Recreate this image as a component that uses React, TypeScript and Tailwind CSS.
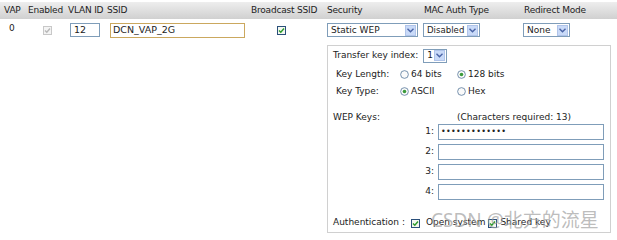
const font = { fontFamily: '"DejaVu Sans", Verdana, sans-serif' };

const Arrow: React.FC = () => (
    <span className="flex items-center justify-center w-[11px] h-[11px] bg-[#c9daf8] border border-[#b0c4ea] mr-[1px]">
        <svg width="7" height="5" viewBox="0 0 7 5">
            <path d="M0.5 0.8 L3.5 3.8 L6.5 0.8" fill="none" stroke="#4a64a6" strokeWidth="1.4" />
        </svg>
    </span>
);

const Select: React.FC<{ value: string; className: string }> = ({ value, className }) => (
    <div className={`flex items-center justify-between border border-[#7f9db9] bg-white h-[14px] ${className}`}>
        <span className="pl-[3px] leading-none">{value}</span>
        <Arrow />
    </div>
);

const Check: React.FC<{ disabled?: boolean }> = ({ disabled }) => (
    <span className={`inline-flex shrink-0 items-center justify-center w-[9px] h-[9px] border ${disabled ? "border-[#c8c8c8] bg-[#f4f4f4]" : "border-[#2a4f7a] bg-[#f4f8f0]"}`}>
        <svg width="7" height="7" viewBox="0 0 7 7">
            <path d="M1 3.5 L2.8 5.3 L6 1.5" fill="none" stroke={disabled ? "#b8b8b8" : "#2a9a2a"} strokeWidth="1.4" />
        </svg>
    </span>
);

const Radio: React.FC<{ on?: boolean }> = ({ on }) => (
    <svg width="9" height="9" viewBox="0 0 10 10" className="shrink-0">
        <circle cx="5" cy="5" r="4.3" fill="#fafafa" stroke="#5a7a9c" strokeWidth="0.9" />
        {on && <circle cx="5" cy="5" r="2" fill="#3a9a3a" />}
    </svg>
);

const KeyRow: React.FC<{ n: number; dots?: boolean }> = ({ n, dots }) => (
    <div className="flex items-center h-[16px] mb-[4px]">
        <span className="w-[101px] text-right">{n}:</span>
        <div className="ml-[4px] w-[166px] h-[16px] border border-[#7f9db9] bg-white flex items-center pl-[2px] text-[8px] tracking-[0.3px] leading-none">
            {dots ? "•••••••••••••" : ""}
        </div>
    </div>
);

const App: React.FC = () => {
    return (
        <div className="w-[617px] h-[240px] bg-white text-[#222] text-[9px] relative overflow-hidden" style={font}>
            <div className="flex h-[17px] mt-[2px] items-center bg-gradient-to-b from-[#eeeeee] to-[#d0d0d0] tracking-[-0.2px]">
                <div className="w-[27px] pl-[4px]">VAP</div>
                <div className="w-[40px] pl-[1px]">Enabled</div>
                <div className="w-[39px] pl-[1px]">VLAN ID</div>
                <div className="w-[144px] pl-[1px]">SSID</div>
                <div className="w-[76px] pl-[1px]">Broadcast SSID</div>
                <div className="w-[97px] pl-[1px]">Security</div>
                <div className="w-[100px] pl-[1px]">MAC Auth Type</div>
                <div className="w-[94px] pl-[1px]">Redirect Mode</div>
            </div>
            <div className="flex items-center h-[16px] mt-[3px]">
                <div className="w-[27px] pl-[9px] self-start">0</div>
                <div className="w-[40px] pl-[16px] flex"><Check disabled /></div>
                <div className="w-[39px] pl-[3px]">
                    <div className="w-[30px] h-[14px] border border-[#7f9db9] flex items-center pl-[3px] text-[9.5px]">12</div>
                </div>
                <div className="w-[144px] pl-[4px]">
                    <div className="w-[135px] h-[15px] border border-[#cba85e] flex items-center pl-[2px] text-[9.5px]">DCN_VAP_2G</div>
                </div>
                <div className="w-[76px] pl-[27px] flex"><Check /></div>
                <div className="w-[97px] pl-[1px]"><Select value="Static WEP" className="w-[91px] text-[9px]" /></div>
                <div className="w-[100px]"><Select value="Disabled" className="w-[57px] text-[8.6px]" /></div>
                <div className="w-[94px]"><Select value="None" className="w-[47px] text-[9px]" /></div>
            </div>
            <div className="ml-[327px] mt-[7px] w-[284px] h-[188px] border border-[#d0d0d0] px-[5px] pt-[3px]">
                <div className="flex items-center h-[13px] gap-[5px]">
                    <span>Transfer key index:</span>
                    <Select value="1" className="w-[24px] text-[9px] h-[12px]" />
                </div>
                <div className="flex items-center h-[17px] mt-[4px] pl-[3px]">
                    <span className="w-[64px]">Key Length:</span>
                    <Radio />
                    <span className="ml-[2px] w-[46px]">64 bits</span>
                    <Radio on />
                    <span className="ml-[2px]">128 bits</span>
                </div>
                <div className="flex items-center h-[17px] pl-[3px]">
                    <span className="w-[64px]">Key Type:</span>
                    <Radio on />
                    <span className="ml-[2px] w-[46px]">ASCII</span>
                    <Radio />
                    <span className="ml-[2px]">Hex</span>
                </div>
                <div className="flex items-center h-[12px] mt-[12px]">
                    <span className="w-[124px]">WEP Keys:</span>
                    <span>(Characters required: 13)</span>
                </div>
                <div>
                    <KeyRow n={1} dots />
                    <KeyRow n={2} />
                    <KeyRow n={3} />
                    <KeyRow n={4} />
                </div>
                <div className="flex items-center h-[14px] mt-[16px]">
                    <span>Authentication :</span>
                    <span className="ml-[6px] flex"><Check /></span>
                    <span className="ml-[6px]">Open system</span>
                    <span className="ml-[3px] flex"><Check /></span>
                    <span className="ml-[3px]">Shared key</span>
                </div>
            </div>
            <div className="absolute left-[431px] top-[211px] text-[19px] text-[#a0a0a0]/70 leading-none" style={{ fontFamily: '"Noto Sans", "Noto Sans CJK SC", sans-serif' }}>
                CSDN @北方的流星
            </div>
        </div>
    );
};

export default App;
